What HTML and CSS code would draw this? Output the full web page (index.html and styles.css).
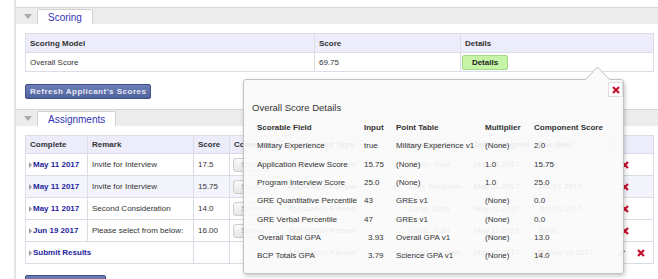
FILE: index.html
```html
<!DOCTYPE html>
<html>
<head>
<meta charset="utf-8">
<link rel="stylesheet" href="styles.css">
</head>
<body>
<div class="page">
  <section class="panel">
    <div class="panel-head"><span class="tri"></span><span class="tab">Scoring</span></div>
    <div class="panel-body">
      <table class="grid">
        <colgroup><col class="c-model"><col class="c-score"><col class="c-details"></colgroup>
        <tr class="hrow"><th>Scoring Model</th><th>Score</th><th>Details</th></tr>
        <tr class="srow"><td>Overall Score</td><td>69.75</td><td class="cell-btn"><span class="btn-green">Details</span></td></tr>
      </table>
      <span class="btn-blue">Refresh Applicant's Scores</span>
    </div>
  </section>
  <section class="panel">
    <div class="panel-head"><span class="tri"></span><span class="tab">Assignments</span></div>
    <div class="panel-body">
      <table class="grid agrid">
        <colgroup><col class="a1"><col class="a2"><col class="a3"><col class="a4"><col class="a5"><col class="a6"><col class="a7"><col class="a8"><col class="a9"></colgroup>
        <tr class="hrow"><th>Complete</th><th>Remark</th><th>Score</th><th>Comments</th><th>Assignment Type</th><th>Assigned To</th><th>Date Assigned</th><th>Due Date</th><th></th></tr>
        <tr><td class="cmp"><span class="mark"></span><span class="lnk">May 11 2017</span></td><td>Invite for Interview</td><td>17.5</td><td class="cbtn"><span class="show">Show</span></td><td>Application Review</td><td>Taylor, Dani</td><td>May 11 2017</td><td>None</td><td class="act"><svg class="x" width="8" height="8" viewBox="0 0 8 8"><path d="M1 1L7 7M7 1L1 7"/></svg></td></tr>
        <tr class="alt"><td class="cmp"><span class="mark"></span><span class="lnk">May 11 2017</span></td><td>Invite for Interview</td><td>15.75</td><td class="cbtn"><span class="show">Show</span></td><td>Application Review</td><td>Carr, Benjamin</td><td>May 11 2017</td><td>Jun 01 2017</td><td class="act"><svg class="x" width="8" height="8" viewBox="0 0 8 8"><path d="M1 1L7 7M7 1L1 7"/></svg></td></tr>
        <tr><td class="cmp"><span class="mark"></span><span class="lnk">May 11 2017</span></td><td>Second Consideration</td><td>14.0</td><td class="cbtn"><span class="show">Show</span></td><td>Application Review</td><td>Lang, Scott</td><td>May 11 2017</td><td>Jun 01 2017</td><td class="act"><svg class="x" width="8" height="8" viewBox="0 0 8 8"><path d="M1 1L7 7M7 1L1 7"/></svg></td></tr>
        <tr><td class="cmp"><span class="mark"></span><span class="lnk">Jun 19 2017</span></td><td>Please select from below:</td><td>16.00</td><td class="cbtn"><span class="show">Show</span></td><td>Application Review</td><td>Lucas, Carl</td><td>May 11 2017</td><td>None</td><td class="act"><svg class="x" width="8" height="8" viewBox="0 0 8 8"><path d="M1 1L7 7M7 1L1 7"/></svg></td></tr>
        <tr><td class="cmp" colspan="2"><span class="mark"></span><span class="lnk">Submit Results</span></td><td></td><td></td><td>Application Review</td><td>Dodd, Norman</td><td>May 11 2017</td><td><span class="cal"></span>May 18 2017</td><td class="act act2"><svg class="pen" width="8" height="8" viewBox="0 0 8 8"><path d="M1 7L1.5 5.2L5.8 0.9L7.1 2.2L2.8 6.5Z"/></svg><svg class="x" width="8" height="8" viewBox="0 0 8 8"><path d="M1 1L7 7M7 1L1 7"/></svg></td></tr>
      </table>
      <span class="btn-blue btn-new">New Assignment</span>
    </div>
  </section>
</div>

<div class="popover">
  <svg class="pop-arrow" width="25" height="14" viewBox="0 0 25 14"><polygon points="0,14 12.5,1 25,14" fill="#fafafa"/><polyline points="0.5,13.5 12.5,1 24.5,13.5" fill="none" stroke="#bdbdbd"/></svg>
  <span class="pop-close"><svg class="x" width="8" height="8" viewBox="0 0 8 8"><path d="M1 1L7 7M7 1L1 7"/></svg></span>
  <h2 class="pop-title">Overall Score Details</h2>
  <table class="detail">
    <colgroup><col class="d1"><col class="d2"><col class="d3"><col class="d4"><col class="d5"></colgroup>
    <tr><th>Scorable Field</th><th>Input</th><th>Point Table</th><th>Multiplier</th><th>Component Score</th></tr>
    <tr><td>Military Experience</td><td>true</td><td>Military Experience v1</td><td>(None)</td><td>2.0</td></tr>
    <tr><td>Application Review Score</td><td>15.75</td><td>(None)</td><td>1.0</td><td>15.75</td></tr>
    <tr><td>Program Interview Score</td><td>25.0</td><td>(None)</td><td>1.0</td><td>25.0</td></tr>
    <tr><td>GRE Quantitative Percentile</td><td>43</td><td>GREs v1</td><td>(None)</td><td>0.0</td></tr>
    <tr><td>GRE Verbal Percentile</td><td>47</td><td>GREs v1</td><td>(None)</td><td>0.0</td></tr>
    <tr><td class="ind">Overall Total GPA</td><td class="ind2">3.93</td><td>Overall GPA v1</td><td>(None)</td><td>13.0</td></tr>
    <tr><td>BCP Totals GPA</td><td class="ind2">3.79</td><td>Science GPA v1</td><td>(None)</td><td>14.0</td></tr>
  </table>
</div>
</body>
</html>
```
FILE: styles.css
```css
html, body {
  margin: 0;
  padding: 0;
  background: #fff;
  overflow: hidden;
}
body {
  font-family: "Liberation Sans", Arial, sans-serif;
  font-size: 8px;
  color: #333;
  position: relative;
  width: 658px;
  height: 279px;
}
.page {
  margin-left: 14px;
  border-left: 2px solid #e3e3e3;
  padding-top: 7px;
  height: 279px;
  box-sizing: border-box;
  overflow: hidden;
}
.panel {
  border-top: 1px solid #d6d6d6;
}
.panel-head {
  height: 16px;
  background: #ececec;
  display: flex;
  align-items: flex-end;
}
.tri {
  width: 0;
  height: 0;
  border-left: 4px solid transparent;
  border-right: 4px solid transparent;
  border-top: 5px solid #ababab;
  margin: 0 5px 0 8px;
  align-self: center;
}
.tab {
  height: 15px;
  box-sizing: border-box;
  background: #fff;
  border: 1px solid #d2d2d2;
  border-bottom: 0;
  border-radius: 2px 2px 0 0;
  padding: 0 10px;
  font-size: 10px;
  line-height: 15px;
  color: #3434b4;
}
.panel-body {
  padding: 9px 0 10px 9px;
}
.grid {
  border-collapse: collapse;
  table-layout: fixed;
  width: 628px;
}
.grid th, .grid td {
  border: 1px solid #dcdce6;
  padding: 0 4px;
  text-align: left;
  white-space: nowrap;
  overflow: hidden;
}
.grid th {
  background: #ececfb;
  font-weight: bold;
  color: #333;
}
.c-model { width: 289px; }
.c-score { width: 146px; }
.c-details { width: 193px; }
.hrow { height: 19px; }
.srow { height: 19px; }
.grid td.cell-btn { padding: 0 0 0 1px; }
.btn-green {
  display: block;
  width: 46px;
  height: 15px;
  box-sizing: border-box;
  background: #c6f4a6;
  border: 1px solid #a2d886;
  border-radius: 2px;
  font-weight: bold;
  line-height: 13px;
  text-align: center;
  color: #222;
}
.btn-blue {
  display: inline-block;
  margin-top: 12px;
  height: 15px;
  box-sizing: border-box;
  padding: 0 4px;
  font-weight: bold;
  font-size: 8px;
  line-height: 13px;
  letter-spacing: 0.5px;
  color: #e4e8f6;
  background: linear-gradient(#6b7eb6, #52649c);
  border: 1px solid #3f4f82;
  border-radius: 2px;
}
.btn-new {
  margin-top: 11px;
  width: 81px;
}
.agrid .hrow { height: 18px; }
.agrid tr { height: 22px; }
.agrid .alt td { background: #f4f4fc; }
.a1 { width: 62px; }
.a2 { width: 106px; }
.a3 { width: 36px; }
.a4 { width: 54px; }
.a5 { width: 121px; }
.a6 { width: 65px; }
.a7 { width: 64px; }
.a8 { width: 80px; }
.a9 { width: 40px; }
.agrid td.cmp { padding-left: 3px; }
.mark {
  display: inline-block;
  width: 0;
  height: 0;
  border-top: 3px solid transparent;
  border-bottom: 3px solid transparent;
  border-left: 3px solid #9a9a9a;
  margin-right: 1px;
  vertical-align: -1px;
}
.lnk {
  font-weight: bold;
  color: #1e1ea0;
}
.agrid td.cbtn { padding-left: 3px; }
.show {
  display: inline-block;
  width: 37px;
  height: 14px;
  box-sizing: border-box;
  border: 1px solid #cdcdcd;
  border-radius: 3px;
  background: linear-gradient(#fbfbfb, #e6e6e6);
  color: #888;
  line-height: 12px;
  text-align: center;
  vertical-align: middle;
}
.cal {
  display: inline-block;
  width: 6px;
  height: 6px;
  background: #d9534f;
  margin-right: 3px;
  vertical-align: -1px;
}
.agrid td.act { padding-left: 7px; }
.agrid td.act2 { padding-left: 4px; }
.x {
  display: inline-block;
  vertical-align: middle;
}
.x path {
  stroke: #c8102e;
  stroke-width: 2.2;
  fill: none;
}
.pen { vertical-align: middle; margin-right: 11px; }
.pen path { fill: #556; }

.popover {
  position: absolute;
  left: 243px;
  top: 79px;
  width: 381px;
  height: 195px;
  box-sizing: border-box;
  background: rgba(250, 250, 250, 0.92);
  border: 1px solid #c2c2c2;
  border-radius: 3px;
  box-shadow: 1px 2px 4px rgba(0, 0, 0, 0.22);
}
.pop-arrow {
  position: absolute;
  left: 341px;
  top: -14px;
}
.pop-close {
  position: absolute;
  right: 0;
  top: 2px;
  width: 15px;
  height: 15px;
  box-sizing: border-box;
  background: #fff;
  border: 1px solid #dedede;
  display: flex;
  align-items: center;
  justify-content: center;
}
.pop-title {
  margin: 0;
  padding: 22px 0 0 8px;
  font-size: 9.5px;
  line-height: 12px;
  font-weight: normal;
  color: #333;
}
.detail {
  margin: 4.5px 0 0 13px;
  border-collapse: collapse;
  table-layout: fixed;
  width: 362px;
}
.detail tr { height: 18.3px; }
.detail th, .detail td {
  padding: 0;
  text-align: left;
  white-space: nowrap;
  color: #333;
}
.detail th { font-weight: bold; }
.detail td.ind { padding-left: 1px; }
.detail td.ind2 { padding-left: 4px; }
.d1 { width: 107px; }
.d2 { width: 32px; }
.d3 { width: 89px; }
.d4 { width: 49px; }
.d5 { width: 85px; }
```
